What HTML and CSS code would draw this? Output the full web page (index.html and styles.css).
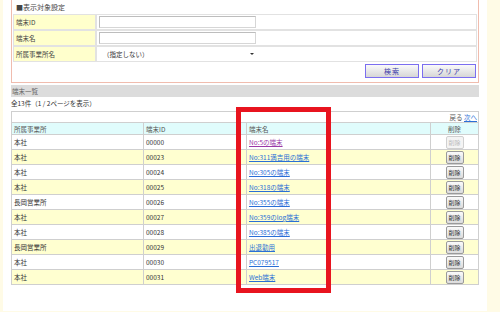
FILE: index.html
```html
<!DOCTYPE html>
<html lang="ja">
<head>
    <meta charset="UTF-8">
    <title>端末一覧</title>
    <link rel="stylesheet" href="styles.css">
</head>
<body>
    <div class="page">
        <!-- 検索条件 -->
        <div class="search-box">
            <div class="search-title">■表示対象設定</div>
            <table class="search-table">
                <tr>
                    <th>端末ID</th>
                    <td><input type="text" class="text-input"></td>
                </tr>
                <tr>
                    <th>端末名</th>
                    <td><input type="text" class="text-input"></td>
                </tr>
                <tr>
                    <th>所属事業所名</th>
                    <td>
                        <span class="select-wrap">
                            <select class="select-input">
                                <option>（指定しない）</option>
                            </select>
                        </span>
                    </td>
                </tr>
            </table>
            <div class="search-buttons">
                <button class="btn">検索</button>
                <button class="btn">クリア</button>
            </div>
        </div>

        <!-- 一覧 -->
        <div class="section-bar">端末一覧</div>
        <div class="count">全13件（1 / 2ページを表示）</div>

        <table class="list-table">
            <tr class="pager-row">
                <td colspan="4"><span class="pager-off">戻る</span> <a href="#">次へ</a></td>
            </tr>
            <tr class="head-row">
                <th class="col-office">所属事業所</th>
                <th class="col-id">端末ID</th>
                <th class="col-name">端末名</th>
                <th class="col-del">削除</th>
            </tr>
            <tr>
                <td>本社</td><td>00000</td><td><a href="#" class="visited">No:5の端末</a></td>
                <td class="col-del"><button class="del-btn" disabled>削除</button></td>
            </tr>
            <tr class="alt">
                <td>本社</td><td>00023</td><td><a href="#">No:311満吉用の端末</a></td>
                <td class="col-del"><button class="del-btn">削除</button></td>
            </tr>
            <tr>
                <td>本社</td><td>00024</td><td><a href="#">No:305の端末</a></td>
                <td class="col-del"><button class="del-btn">削除</button></td>
            </tr>
            <tr class="alt">
                <td>本社</td><td>00025</td><td><a href="#">No:318の端末</a></td>
                <td class="col-del"><button class="del-btn">削除</button></td>
            </tr>
            <tr>
                <td>長岡営業所</td><td>00026</td><td><a href="#">No:355の端末</a></td>
                <td class="col-del"><button class="del-btn">削除</button></td>
            </tr>
            <tr class="alt">
                <td>本社</td><td>00027</td><td><a href="#">No:359のlog端末</a></td>
                <td class="col-del"><button class="del-btn">削除</button></td>
            </tr>
            <tr>
                <td>本社</td><td>00028</td><td><a href="#">No:385の端末</a></td>
                <td class="col-del"><button class="del-btn">削除</button></td>
            </tr>
            <tr class="alt">
                <td>長岡営業所</td><td>00029</td><td><a href="#">出退勤用</a></td>
                <td class="col-del"><button class="del-btn">削除</button></td>
            </tr>
            <tr>
                <td>本社</td><td>00030</td><td><a href="#">PC079517</a></td>
                <td class="col-del"><button class="del-btn">削除</button></td>
            </tr>
            <tr class="alt">
                <td>本社</td><td>00031</td><td><a href="#">Web端末</a></td>
                <td class="col-del"><button class="del-btn">削除</button></td>
            </tr>
        </table>
    </div>

    <!-- 注目枠 -->
    <div class="highlight"></div>
</body>
</html>
```

FILE: styles.css
```css
/* Reset */
* {
    margin: 0;
    padding: 0;
    box-sizing: border-box;
}

body {
    font-family: "Noto Sans CJK JP", "Liberation Sans", sans-serif;
    font-size: 6.5px;
    color: #333;
    background-color: #fffbe6;
    height: 312px;
    overflow: hidden;
    position: relative;
}

.page {
    margin-left: 3px;
    width: 484px;
    min-height: 312px;
    padding: 0 8px;
    background-color: #fff;
}

/* Search box */
.search-box {
    margin-top: -1px;
    border: 1px solid #f0bcae;
    padding: 0 1px 4px 1px;
}

.search-title {
    height: 14px;
    line-height: 14px;
    padding-left: 3px;
    color: #444;
    font-size: 7px;
}

.search-table {
    width: 100%;
    border-collapse: separate;
    border-spacing: 0;
}

.search-table th,
.search-table td {
    height: 16px;
    border: 1px solid #e2e2e2;
    vertical-align: middle;
}

.search-table th {
    width: 83px;
    background-color: #ffffcc;
    font-weight: normal;
    text-align: left;
    padding-left: 2px;
    color: #444;
}

.search-table td {
    padding-left: 2px;
}

.text-input {
    display: block;
    width: 157px;
    height: 12px;
    border: 1px solid #d6d6d6;
    border-top-color: #bdbdbd;
    border-left-color: #bdbdbd;
    background: #fff;
}

.select-wrap {
    display: block;
    position: relative;
    width: 158px;
}

.select-wrap::after {
    content: "";
    position: absolute;
    right: 3px;
    top: 5px;
    border-left: 2px solid transparent;
    border-right: 2px solid transparent;
    border-top: 2px solid #333;
}

.select-input {
    display: block;
    width: 158px;
    height: 12px;
    border: none;
    appearance: none;
    -webkit-appearance: none;
    background: #fff;
    font-family: inherit;
    font-size: 6.5px;
    color: #333;
    padding-left: 4px;
}

.search-buttons {
    display: flex;
    justify-content: flex-end;
    gap: 3px;
    padding: 2px 1px 0 0;
}

.btn {
    width: 54px;
    height: 14px;
    border: 1px solid #7b6ef0;
    background: linear-gradient(#fafafa, #d6d6d6);
    font-family: inherit;
    font-size: 7px;
    color: #3a3aa8;
    letter-spacing: 1px;
}

/* List */
.section-bar {
    margin-top: 2px;
    height: 12px;
    line-height: 12px;
    background-color: #dcdcdc;
    color: #666;
    padding-left: 1px;
}

.count {
    height: 12px;
    line-height: 12px;
    color: #333;
}

.list-table {
    margin-top: 2px;
    width: 468px;
    border-collapse: collapse;
}

.list-table td,
.list-table th {
    border: 1px solid #cfcfcf;
    padding-left: 2px;
    text-align: left;
    font-weight: normal;
    vertical-align: middle;
}

.pager-row td {
    height: 10px;
    text-align: right;
    padding-right: 1px;
    border-bottom: none;
}

.pager-off {
    color: #555;
}

.pager-row a {
    color: #2060d8;
}

.head-row th {
    height: 12px;
    background-color: #e0fcfc;
    color: #555;
}

.list-table tr td {
    height: 15px;
}

.list-table tr.pager-row td {
    height: 10px;
}

.list-table tr.alt td {
    background-color: #ffffd0;
}

.col-office {
    width: 132px;
}

.col-id {
    width: 103px;
}

.col-name {
    width: 184px;
}

.list-table .col-del {
    text-align: center;
    padding-left: 0;
}

.list-table a {
    color: #2a6fd6;
}

.list-table a.visited {
    color: #9a3aa8;
}

.del-btn {
    display: inline-block;
    width: 18px;
    height: 13px;
    vertical-align: middle;
    border: 1px solid #9a9a9a;
    border-radius: 2px;
    background: linear-gradient(#fafafa, #dcdcdc);
    font-family: inherit;
    font-size: 6px;
    color: #333;
}

.del-btn:disabled {
    color: #bbb;
    border-color: #d0d0d0;
    background: #f4f4f4;
}

/* Red annotation frame */
.highlight {
    position: absolute;
    left: 236px;
    top: 107px;
    width: 95px;
    height: 186px;
    border: 5px solid #e8141f;
}
```
